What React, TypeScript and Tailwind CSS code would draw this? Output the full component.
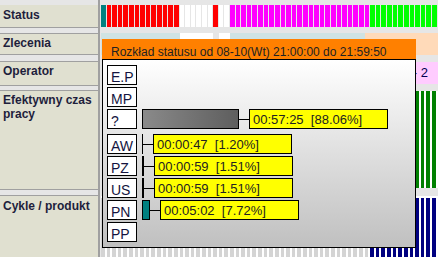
import React from "react"

const MINUTES = Array.from({ length: 60 }, (_, i) => i)

function statusColor(i: number) {
  if (i === 0) return "bg-[#008080]"
  if (i <= 13) return "bg-[#ff0000]"
  if (i <= 19) return "bg-white"
  if (i === 20) return "bg-[#ff0000]"
  if (i <= 22) return "bg-white"
  if (i <= 47) return "bg-[#ff00ff]"
  return "bg-[#00ff00]"
}

interface StatRowProps {
  label: string
  bar?: React.ReactNode
  value?: string
  className?: string
}

function StatRow({ label, bar, value, className = "" }: StatRowProps) {
  return (
    <div className={`flex h-[20px] ${className}`}>
      <div className="w-[30px] border border-black bg-white pl-[3px] text-[14px] leading-[22px] text-[#141440]">
        {label}
      </div>
      {value && (
        <>
          <div className="ml-[5px] flex">{bar}</div>
          <div className="w-[10px] h-px bg-black self-center" />
          <div className="w-[139px] border border-black bg-[#ffff00] pl-[3px] text-[13px] leading-[19px] text-[#222] whitespace-pre">
            {value}
          </div>
        </>
      )}
    </div>
  )
}

function SideRow({ children, className }: { children: React.ReactNode; className: string }) {
  return (
    <div className={`bg-[#e0e0d0] border-[#a0a0a0] pl-[3px] text-[12px] leading-[14px] font-bold text-[#1e1e3c] ${className}`}>
      {children}
    </div>
  )
}

export default function App() {
  return (
    <div className="relative w-[438px] h-[257px] overflow-hidden bg-[#e6e6e6] flex font-['Liberation_Sans',Arial,sans-serif]">
      {/* sidebar */}
      <div className="w-[100px] shrink-0 border-r-2 border-[#a0a0a0] flex flex-col pt-[5px]">
        <SideRow className="h-[23px] border-b pt-[3px]">Status</SideRow>
        <SideRow className="mt-[5px] h-[22px] border-y pt-[2px]">Zlecenia</SideRow>
        <SideRow className="mt-[6px] h-[25px] border-y pt-[2px]">Operator</SideRow>
        <SideRow className="mt-[4px] h-[100px] border-y pt-[2px]">Efektywny czas pracy</SideRow>
        <SideRow className="mt-[5px] flex-1 border-t pt-[3px]">Cykle / produkt</SideRow>
      </div>

      {/* chart */}
      <div className="flex-1 pl-px flex flex-col pt-[5px]">
        <div className="flex h-[22px]">
          {MINUTES.map((i) => (
            <div key={i} className="flex-1 flex">
              <div className={`flex-1 mr-px ${statusColor(i)}`} />
            </div>
          ))}
        </div>
        <div className="mt-[6px] flex h-[22px]">
          <div className="flex-[14] bg-[#cfe3e3]" />
          <div className="flex-[6] bg-white" />
          <div className="flex-[1]" />
          <div className="flex-[2] bg-white" />
          <div className="flex-[24] bg-[#cfe3e3]" />
          <div className="flex-[13] bg-[#ffdab9]" />
        </div>
        <div className="mt-[7px] flex h-[22px]">
          <div className="flex-[47]" />
          <div className="flex-[13] bg-[#ffccff] flex items-center justify-end pr-[10px] text-[13px] text-[#000050] whitespace-pre">
            - 2
          </div>
        </div>
        <div className="mt-[7px] flex h-[97px]">
          {MINUTES.map((i) => (
            <div key={i} className={`flex-1 flex ${i >= 48 ? "bg-white" : ""}`}>
              {i >= 48 && <div className="flex-1 mr-[2px] bg-[#008000]" />}
            </div>
          ))}
        </div>
        <div className="mt-[8px] flex flex-1">
          {MINUTES.map((i) => (
            <div key={i} className="flex-1 flex bg-white">
              <div className={`flex-1 mt-[2px] mr-[2px] ${i >= 48 ? "bg-[#000080]" : "bg-[#d4d4d4]"}`} />
            </div>
          ))}
        </div>
      </div>

      {/* tooltip */}
      <div className="absolute left-[102px] top-[39px] w-[314px]">
        <div className="h-[20px] bg-[#ff8000] pl-[9px] pt-[6px] text-[12px] leading-[14px] text-[#222] whitespace-nowrap">
          Rozkład statusu od 08-10(Wt) 21:00:00 do 21:59:50
        </div>
        <div className="h-[189px] border border-black bg-linear-to-b from-white to-[#c0c0c0] pl-[4px] pt-[5px] flex flex-col gap-[2px]">
          <StatRow label="E.P" />
          <StatRow label="MP" />
          <StatRow
            label="?"
            className="mb-[3px]"
            bar={<div className="w-[97px] border border-black bg-linear-to-r from-[#8a8a8a] to-[#5e5e5e]" />}
            value="00:57:25  [88.06%]"
          />
          <StatRow label="AW" bar={<div className="w-px bg-black" />} value="00:00:47  [1.20%]" />
          <StatRow label="PZ" bar={<div className="w-[2px] bg-black" />} value="00:00:59  [1.51%]" />
          <StatRow label="US" bar={<div className="w-[2px] bg-black" />} value="00:00:59  [1.51%]" />
          <StatRow
            label="PN"
            bar={<div className="w-[8px] border border-black bg-[#008080]" />}
            value="00:05:02  [7.72%]"
          />
          <StatRow label="PP" />
        </div>
      </div>
    </div>
  )
}
